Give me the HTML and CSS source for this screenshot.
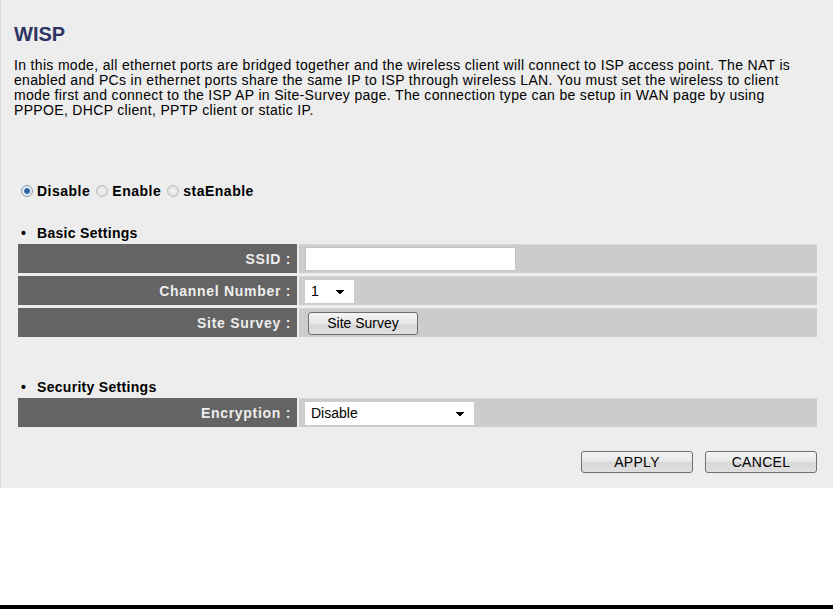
FILE: index.html
```html
<!DOCTYPE html>
<html lang="en">
<head>
    <title>WISP</title>
    <link rel="stylesheet" href="styles.css">
</head>
<body>
    <div class="page">
        <h2 class="title">WISP</h2>

        <p class="desc">In this mode, all ethernet ports are bridged together and the wireless client will connect to ISP access point. The NAT is<br>
        enabled and PCs in ethernet ports share the same IP to ISP through wireless LAN. You must set the wireless to client<br>
        mode first and connect to the ISP AP in Site-Survey page. The connection type can be setup in WAN page by using<br>
        PPPOE, DHCP client, PPTP client or static IP.</p>

        <div class="mode">
            <label><input type="radio" name="wisp" checked> Disable</label>
            <label><input type="radio" name="wisp"> Enable</label>
            <label><input type="radio" name="wisp"> staEnable</label>
        </div>

        <div class="section-title">Basic Settings</div>
        <table class="settings">
            <tr>
                <td class="label">SSID :</td>
                <td class="value"><input type="text" class="ssid"></td>
            </tr>
            <tr>
                <td class="label">Channel Number :</td>
                <td class="value">
                    <select class="channel">
                        <option>1</option>
                    </select>
                </td>
            </tr>
            <tr>
                <td class="label">Site Survey :</td>
                <td class="value"><button class="btn survey-btn">Site Survey</button></td>
            </tr>
        </table>

        <div class="section-title security">Security Settings</div>
        <table class="settings">
            <tr>
                <td class="label">Encryption :</td>
                <td class="value">
                    <select class="encryption">
                        <option>Disable</option>
                    </select>
                </td>
            </tr>
        </table>

        <div class="actions">
            <button class="btn action-btn">APPLY</button>
            <button class="btn action-btn">CANCEL</button>
        </div>
    </div>

    <div class="spacer"></div>
    <div class="bottom-bar"></div>
</body>
</html>
```

FILE: styles.css
```css
body {
    margin: 0;
    background-color: #ffffff;
    font-family: "Liberation Sans", Arial, sans-serif;
    font-size: 14px;
    color: #000;
}

.page {
    background-color: #ededed;
    border-left: 1px solid #dcdcdc;
    height: 488px;
    box-sizing: border-box;
    padding-top: 22px;
    overflow: hidden;
}

.title {
    margin: 0 0 0 13px;
    font-size: 20px;
    font-weight: bold;
    color: #2e3462;
    line-height: 24px;
}

.desc {
    margin: 12px 0 0 13px;
    line-height: 15px;
    letter-spacing: 0.33px;
    white-space: nowrap;
}

.mode {
    margin: 65px 0 0 20px;
    font-weight: bold;
    display: flex;
    gap: 6px;
    line-height: 16px;
    letter-spacing: 0.5px;
}

.mode label {
    display: flex;
    align-items: center;
}

.mode input {
    appearance: none;
    width: 12px;
    height: 12px;
    margin: 0 4px 0 0;
    border-radius: 50%;
    border: 1px solid #b9b9b9;
    background: radial-gradient(circle, #f4f4f4 0, #d8d8d8 100%);
    box-sizing: border-box;
}

.mode input:checked {
    border-color: #8a9fb3;
    background: radial-gradient(circle, #1d4f7d 0, #3a78b0 2.5px, #e9eef3 3.5px, #d2dbe4 100%);
}

.section-title {
    margin: 26px 0 0 20px;
    font-weight: bold;
    line-height: 16px;
    letter-spacing: 0.3px;
}

.section-title::before {
    content: "\2022";
    display: inline-block;
    width: 16px;
}

.section-title.security {
    margin-top: 39px;
}

.settings {
    margin-left: 15px;
    width: 803px;
    border-spacing: 2px 3px;
}

.settings td {
    height: 28px;
    padding: 0;
}

.label {
    width: 279px;
    background-color: #646464;
    color: #eeeeee;
    font-weight: bold;
    text-align: right;
    letter-spacing: 0.7px;
    padding-right: 6px !important;
    box-sizing: border-box;
}

.value {
    background-color: #cccccc;
    border-top: 1px solid #d9d9d9;
    padding-left: 6px !important;
}

.ssid {
    width: 211px;
    height: 24px;
    box-sizing: border-box;
    border: 1px solid #c4c4c4;
    background: #fff;
    display: block;
    font-family: "Liberation Sans", Arial, sans-serif;
}

select {
    appearance: none;
    height: 23px;
    border: none;
    background-color: #fff;
    font-family: "Liberation Sans", Arial, sans-serif;
    font-size: 14px;
    padding-left: 6px;
    display: block;
    background-image: linear-gradient(45deg, transparent 50%, #000 50%), linear-gradient(-45deg, transparent 50%, #000 50%);
    background-size: 4px 4px, 4px 4px;
    background-repeat: no-repeat;
}

.channel {
    width: 49px;
    background-position: right 14px top 10px, right 10px top 10px;
}

.encryption {
    width: 169px;
    background-position: right 14px top 10px, right 10px top 10px;
}

.btn {
    font-family: "Liberation Sans", Arial, sans-serif;
    font-size: 14px;
    color: #000;
    border: 1px solid #707070;
    border-radius: 3px;
    background: linear-gradient(#f4f4f4, #e6e6e6 50%, #d8d8d8 51%, #dedede);
    height: 23px;
    padding: 0;
}

.survey-btn {
    width: 110px;
    margin-left: 3px;
    display: block;
}

.actions {
    display: flex;
    justify-content: flex-end;
    gap: 12px;
    margin: 21px 16px 0 0;
}

.action-btn {
    width: 112px;
    height: 22px;
    letter-spacing: 0.3px;
}

.spacer {
    height: 117px;
}

.bottom-bar {
    height: 4px;
    background-color: #000;
}
```
